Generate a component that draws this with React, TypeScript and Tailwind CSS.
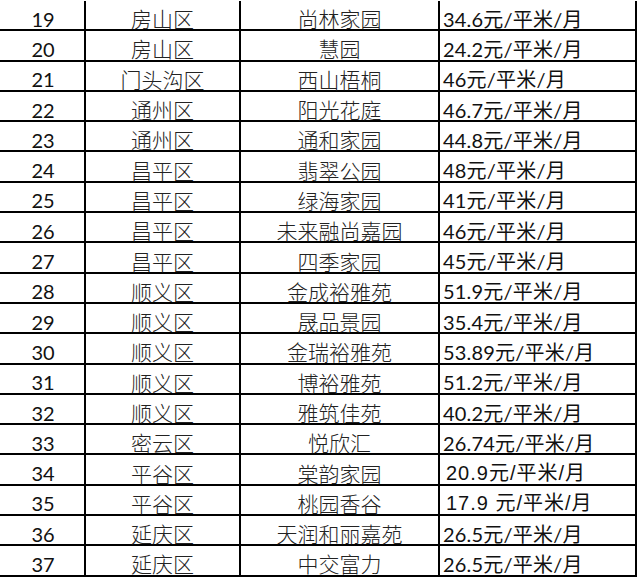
import React from 'react';

interface Row {
  no: number;
  district: string;
  estate: string;
  price: string;
  alt?: boolean;
}

const rows: Row[] = [
  { no: 19, district: '房山区', estate: '尚林家园', price: '34.6元/平米/月' },
  { no: 20, district: '房山区', estate: '慧园', price: '24.2元/平米/月' },
  { no: 21, district: '门头沟区', estate: '西山梧桐', price: '46元/平米/月' },
  { no: 22, district: '通州区', estate: '阳光花庭', price: '46.7元/平米/月' },
  { no: 23, district: '通州区', estate: '通和家园', price: '44.8元/平米/月' },
  { no: 24, district: '昌平区', estate: '翡翠公园', price: '48元/平米/月' },
  { no: 25, district: '昌平区', estate: '绿海家园', price: '41元/平米/月' },
  { no: 26, district: '昌平区', estate: '未来融尚嘉园', price: '46元/平米/月' },
  { no: 27, district: '昌平区', estate: '四季家园', price: '45元/平米/月' },
  { no: 28, district: '顺义区', estate: '金成裕雅苑', price: '51.9元/平米/月' },
  { no: 29, district: '顺义区', estate: '晟品景园', price: '35.4元/平米/月' },
  { no: 30, district: '顺义区', estate: '金瑞裕雅苑', price: '53.89元/平米/月' },
  { no: 31, district: '顺义区', estate: '博裕雅苑', price: '51.2元/平米/月' },
  { no: 32, district: '顺义区', estate: '雅筑佳苑', price: '40.2元/平米/月' },
  { no: 33, district: '密云区', estate: '悦欣汇', price: '26.74元/平米/月' },
  { no: 34, district: '平谷区', estate: '棠韵家园', price: '20.9元/平米/月', alt: true },
  { no: 35, district: '平谷区', estate: '桃园香谷', price: '17.9 元/平米/月', alt: true },
  { no: 36, district: '延庆区', estate: '天润和丽嘉苑', price: '26.5元/平米/月' },
  { no: 37, district: '延庆区', estate: '中交富力', price: '26.5元/平米/月' },
];

const cell = 'h-full flex items-center pt-[7px] border-r-2 border-black';

const App: React.FC = () => {
  return (
    <div
      className="w-[640px] h-[578px] bg-white text-[#111] overflow-hidden pt-[1px]"
      style={{ fontFamily: 'Lato, "Noto Sans CJK SC", sans-serif' }}
    >
      {rows.map((r) => (
        <div key={r.no} className="flex h-[30.3px] w-[637px] border-b-2 border-black text-[20px] leading-none">
          <div className={`${cell} w-[86px] justify-center pl-[2px]`}>{r.no}</div>
          <div className={`${cell} w-[155px] justify-center font-light text-[21px] text-[#222]`}>{r.district}</div>
          <div className={`${cell} w-[199px] justify-center font-light text-[21px] text-[#222]`}>{r.estate}</div>
          <div
            className={`${cell} w-[197px] ${r.alt ? 'pl-[6px] tracking-[1px]' : 'pl-[3px] tracking-[0.2px]'}`}
            style={r.alt ? { fontFamily: '"Liberation Sans", "Noto Sans CJK SC", sans-serif' } : undefined}
          >
            {r.price}
          </div>
        </div>
      ))}
    </div>
  );
};

export default App;
